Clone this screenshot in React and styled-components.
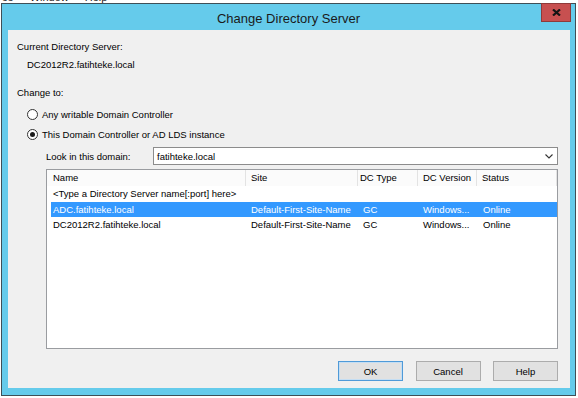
import React from "react";
import styled, { createGlobalStyle } from "styled-components";

const Global = createGlobalStyle`
  html, body { margin: 0; padding: 0; background: #ffffff; }
  body { font-family: "Liberation Sans", Arial, sans-serif; }
  * { box-sizing: border-box; }
`;

const Page = styled.div`
  width: 578px;
  height: 398px;
  overflow: hidden;
  background: #ffffff;
  position: relative;
`;

const TopStrip = styled.div`
  height: 3px;
  overflow: hidden;
  display: flex;
  gap: 16px;
  padding-left: 2px;
  font-size: 11px;
  color: #222;
`;

const StripText = styled.span`
  display: block;
  line-height: 12px;
  margin-top: -9px;
  white-space: nowrap;
`;

const Window = styled.div`
  margin-left: 1px;
  width: 575px;
  height: 393px;
  background: #65cbeb;
  border: 1px solid #3e4f57;
  display: flex;
  flex-direction: column;
`;

const TitleBar = styled.div`
  position: relative;
  height: 26px;
  padding-top: 3px;
  text-align: center;
  font-size: 13px;
  line-height: 23px;
  color: #1a1a1a;
`;

const CloseButton = styled.div`
  position: absolute;
  top: -1px;
  right: 4px;
  width: 30px;
  height: 19px;
  background: #c75050;
  border: 1px solid #8f3a3a;
  display: flex;
  align-items: center;
  justify-content: center;
`;

const Client = styled.div`
  margin: 0 5px 7px 6px;
  height: 358px;
  background: #f0f0f0;
  padding: 9px 12px 0 9px;
  display: flex;
  flex-direction: column;
  font-size: 9.5px;
  color: #000;
`;

const Line = styled.div`
  height: 16px;
  line-height: 16px;
  white-space: nowrap;
  margin-top: ${(p) => p.$top || 0}px;
  padding-left: ${(p) => p.$indent || 0}px;
`;

const RadioRow = styled.label`
  display: flex;
  align-items: center;
  height: 16px;
  margin-top: ${(p) => p.$top || 0}px;
  padding-left: 10px;
  gap: 4px;
  white-space: nowrap;
`;

const RadioCircle = styled.span`
  width: 11px;
  height: 11px;
  border-radius: 50%;
  border: 1px solid #333;
  background: #fff;
  display: flex;
  align-items: center;
  justify-content: center;
  &::after {
    content: "";
    width: 5px;
    height: 5px;
    border-radius: 50%;
    background: ${(p) => (p.$checked ? "#1a1a1a" : "transparent")};
  }
`;

const DomainRow = styled.div`
  display: flex;
  align-items: center;
  height: 18px;
  margin-top: 5px;
  padding-left: 29px;
`;

const DomainLabel = styled.span`
  width: 107px;
  white-space: nowrap;
`;

const Combo = styled.div`
  flex: 1;
  height: 18px;
  background: #fff;
  border: 1px solid #8c8c8c;
  display: flex;
  align-items: center;
  justify-content: space-between;
  padding: 0 4px 0 3px;
`;

const List = styled.div`
  margin-top: 4px;
  margin-left: 29px;
  height: 180px;
  background: #fff;
  border: 1px solid #9a9ca0;
`;

const Header = styled.div`
  display: grid;
  grid-template-columns: 199px 112px 60px 59px 80px;
  height: 16px;
  background: #fbfbfb;
`;

const HeaderCell = styled.div`
  line-height: 16px;
  padding-left: ${(p) => p.$pad}px;
  border-right: 1px solid #e3e3e3;
  white-space: nowrap;
`;

const Row = styled.div`
  display: grid;
  grid-template-columns: 195px 112px 60px 59px 80px;
  margin-left: 4px;
  height: 15.5px;
  line-height: 15.5px;
  background: ${(p) => (p.$selected ? "#3399ff" : "transparent")};
  color: ${(p) => (p.$selected ? "#ffffff" : "#000")};
`;

const Cell = styled.div`
  padding-left: ${(p) => p.$pad}px;
  white-space: nowrap;
  overflow: hidden;
`;

const Buttons = styled.div`
  margin-top: 12px;
  display: flex;
  justify-content: flex-end;
  gap: 12.5px;
`;

const Button = styled.button`
  width: 65px;
  height: 20px;
  padding: 0;
  font-family: inherit;
  font-size: 9.5px;
  color: #000;
  background: #e1e1e1;
  border: 1px solid ${(p) => (p.$default ? "#4f9ad8" : "#acacac")};
  box-shadow: ${(p) => (p.$default ? "inset 0 0 0 1px #c5def3" : "none")};
`;

const columns = [
  { label: "Name", pad: 6, rowPad: 2 },
  { label: "Site", pad: 5, rowPad: 5 },
  { label: "DC Type", pad: 2, rowPad: 5 },
  { label: "DC Version", pad: 5, rowPad: 5 },
  { label: "Status", pad: 5, rowPad: 6 },
];

const rows = [
  { cells: ["<Type a Directory Server name[:port] here>", "", "", "", ""] },
  { cells: ["ADC.fatihteke.local", "Default-First-Site-Name", "GC", "Windows...", "Online"], selected: true },
  { cells: ["DC2012R2.fatihteke.local", "Default-First-Site-Name", "GC", "Windows...", "Online"] },
];

export default function App() {
  return (
    <Page>
      <Global />
      <TopStrip>
        <StripText>ce</StripText>
        <StripText>Window</StripText>
        <StripText>Help</StripText>
      </TopStrip>
      <Window>
        <TitleBar>
          Change Directory Server
          <CloseButton>
            <svg width="9" height="7" viewBox="0 0 9 7">
              <path d="M1 0.5 L8 6.5 M8 0.5 L1 6.5" stroke="#141414" strokeWidth="2.2" />
            </svg>
          </CloseButton>
        </TitleBar>
        <Client>
          <Line>Current Directory Server:</Line>
          <Line $top={1.5} $indent={10}>DC2012R2.fatihteke.local</Line>
          <Line $top={12.5}>Change to:</Line>
          <RadioRow $top={5}>
            <RadioCircle />
            Any writable Domain Controller
          </RadioRow>
          <RadioRow $top={4}>
            <RadioCircle $checked />
            This Domain Controller or AD LDS instance
          </RadioRow>
          <DomainRow>
            <DomainLabel>Look in this domain:</DomainLabel>
            <Combo>
              <span>fatihteke.local</span>
              <svg width="8" height="5" viewBox="0 0 8 5">
                <path d="M0.5 0.5 L4 4 L7.5 0.5" stroke="#333" strokeWidth="1.1" fill="none" />
              </svg>
            </Combo>
          </DomainRow>
          <List>
            <Header>
              {columns.map((c) => (
                <HeaderCell key={c.label} $pad={c.pad}>
                  {c.label}
                </HeaderCell>
              ))}
            </Header>
            {rows.map((r, i) => (
              <Row key={i} $selected={r.selected}>
                {r.cells.map((t, j) => (
                  <Cell key={j} $pad={columns[j].rowPad}>
                    {t}
                  </Cell>
                ))}
              </Row>
            ))}
          </List>
          <Buttons>
            <Button $default>OK</Button>
            <Button>Cancel</Button>
            <Button>Help</Button>
          </Buttons>
        </Client>
      </Window>
    </Page>
  );
}
